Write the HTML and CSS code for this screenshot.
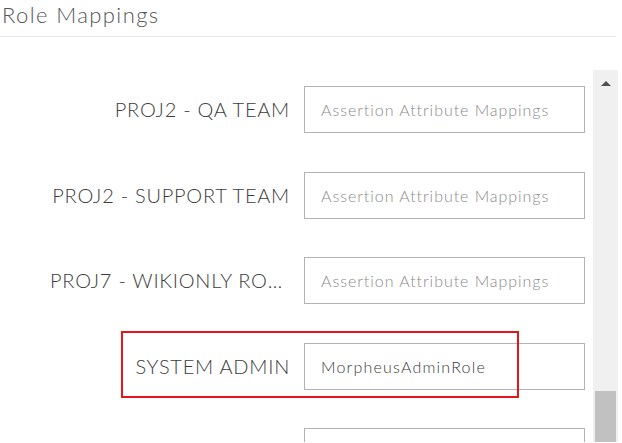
FILE: index.html
```html
<!DOCTYPE html>
<html>
<head>
<meta charset="utf-8">
<link rel="stylesheet" href="styles.css">
</head>
<body>
<div class="header">Role Mappings</div>
<div class="main">
  <div class="list">
    <div class="row">
      <div class="label">PROJ2 - QA TEAM</div>
      <div class="input placeholder">Assertion Attribute Mappings</div>
    </div>
    <div class="row">
      <div class="label">PROJ2 - SUPPORT TEAM</div>
      <div class="input placeholder">Assertion Attribute Mappings</div>
    </div>
    <div class="row">
      <div class="label">PROJ7 - WIKIONLY ROLE</div>
      <div class="input placeholder">Assertion Attribute Mappings</div>
    </div>
    <div class="row highlighted">
      <div class="label">SYSTEM ADMIN</div>
      <div class="input value">MorpheusAdminRole</div>
      <div class="highlight"></div>
    </div>
    <div class="row">
      <div class="label"></div>
      <div class="input placeholder"></div>
    </div>
  </div>
  <div class="scrollbar">
    <div class="arrow"></div>
    <div class="track"></div>
    <div class="thumb"></div>
  </div>
</div>
</body>
</html>
```
FILE: styles.css
```css
html, body {
  margin: 0;
  padding: 0;
  background: #ffffff;
}
body {
  width: 622px;
  height: 443px;
  overflow: hidden;
  font-family: "Lato", "Open Sans", sans-serif;
}
.header {
  height: 37px;
  box-sizing: border-box;
  padding-left: 2px;
  padding-top: 2px;
  font-size: 22px;
  font-weight: 300;
  letter-spacing: 1.4px;
  color: #555555;
  line-height: 26px;
  border-bottom: 1px solid #e6e6e6;
  margin-right: 6px;
}
.main {
  display: flex;
  margin-top: 33px;
  height: 372px;
  overflow: hidden;
}
.list {
  width: 593px;
  padding-top: 16px;
  display: flex;
  flex-direction: column;
  gap: 38.5px;
  overflow: hidden;
}
.row {
  position: relative;
  display: flex;
  align-items: center;
  height: 47px;
  flex-shrink: 0;
}
.label {
  margin-left: 50px;
  width: 240px;
  padding-right: 14px;
  padding-bottom: 1px;
  text-align: right;
  white-space: nowrap;
  overflow: hidden;
  text-overflow: ellipsis;
  font-size: 20px;
  font-weight: 300;
  letter-spacing: 0.75px;
  color: #3c3c3c;
}
.input {
  width: 281px;
  height: 47px;
  box-sizing: border-box;
  border: 1px solid #b3b3b3;
  padding-left: 16px;
  font-size: 16px;
  line-height: 45px;
  white-space: nowrap;
}
.placeholder {
  color: #8a8a8a;
  font-weight: 300;
  letter-spacing: 0.95px;
}
.value {
  color: #3a3a3a;
  font-weight: 300;
  letter-spacing: 1.2px;
}
.highlight {
  position: absolute;
  left: 121px;
  top: -12px;
  width: 398px;
  height: 67px;
  box-sizing: border-box;
  border: 2px solid #e8141b;
}
.scrollbar {
  width: 25px;
  background: #f0f0f0;
  display: flex;
  flex-direction: column;
  align-items: center;
}
.arrow {
  margin-top: 11px;
  width: 0;
  height: 0;
  border-left: 5px solid transparent;
  border-right: 5px solid transparent;
  border-bottom: 5px solid #505050;
}
.track {
  flex: 1;
}
.thumb {
  width: 21px;
  height: 51px;
  background: #c1c1c1;
}
```
